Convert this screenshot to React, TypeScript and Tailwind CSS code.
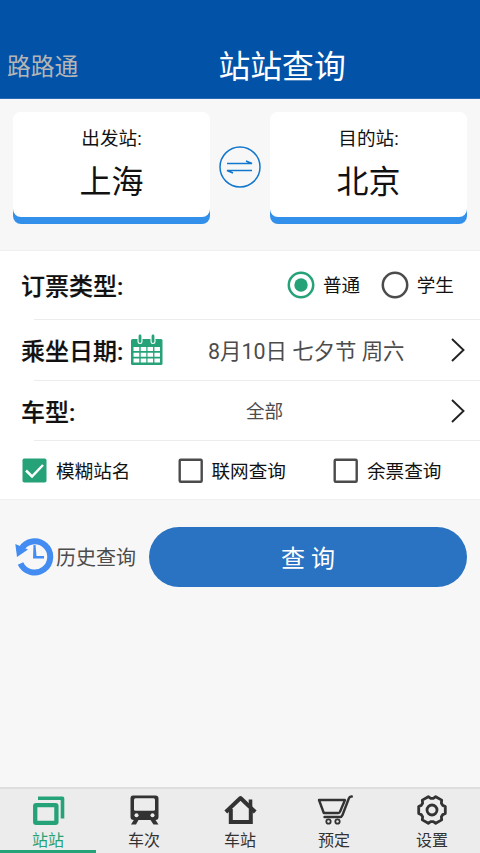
import type { ReactNode } from "react";

function StationCard({ label, name }: { label: string; name: string }) {
  return (
    <button className="block h-28 w-[197px] rounded-lg bg-[linear-gradient(to_bottom,#fff_50%,#3290eb_50%)] pb-[7px]">
      <span className="flex h-[105px] flex-col items-center rounded-lg bg-white">
        <span className="mt-[13px] text-[18.6px] leading-7">{label}</span>
        <span className="mt-1 text-[32px] leading-[50px]">{name}</span>
      </span>
    </button>
  );
}

function Radio({ label, checked = false }: { label: string; checked?: boolean }) {
  return (
    <label className="flex items-center gap-2">
      <svg width="28" height="28" viewBox="0 0 28 28" fill="none">
        <circle cx="14" cy="14" r="12.2" stroke={checked ? "#26a278" : "#4b4b4b"} strokeWidth="2.5" />
        {checked && <circle cx="14" cy="14" r="6.7" fill="#26a278" />}
      </svg>
      <span className="pt-1 text-[18.6px]">{label}</span>
    </label>
  );
}

function Check({ label, checked = false }: { label: string; checked?: boolean }) {
  return (
    <label className="flex w-[155.5px] shrink-0 items-center gap-[9px]">
      <svg width="25" height="25" viewBox="0 0 25 25" fill="none">
        {checked ? (
          <>
            <rect x=".5" y=".5" width="24" height="24" rx="1.8" fill="#26a278" />
            <path d="m4 12.500 6 6L21 7" stroke="white" strokeWidth="2.500" />
          </>
        ) : (
          <rect x="1.700" y="1.700" width="22" height="22" rx="1" stroke="#4b4b4b" strokeWidth="2.400" />
        )}
      </svg>
      <span className="pt-[4px] text-[18.6px]">{label}</span>
    </label>
  );
}

function RowTitle({ children }: { children: ReactNode }) {
  return <h2 className="pt-[4px] text-[24px] font-medium [-webkit-text-stroke:0.2px_#111]">{children}</h2>;
}

function Arrow() {
  return (
    <svg width="16" height="26" viewBox="0 0 16 26" fill="none" stroke="#222" strokeWidth="1.900">
      <path d="m2 2 11.500 11L2 24" />
    </svg>
  );
}

function Tab({ label, active = false, children }: { label: string; active?: boolean; children: ReactNode }) {
  return (
    <button
      className={
        active
          ? "flex w-24 flex-col items-center border-b-3 border-[#26a278] pt-1.5 text-[#26a278]"
          : "flex w-24 flex-col items-center border-b-3 border-transparent pt-1.5 text-[#333]"
      }
    >
      <svg className="shrink-0" width="38" height="34" viewBox="0 0 38 34" fill="none" stroke="currentColor" strokeWidth="2.500">
        {children}
      </svg>
      <span className="mt-[2px] text-base leading-5">{label}</span>
    </button>
  );
}

export default function App() {
  return (
    <div className="flex h-[853px] w-[480px] flex-col overflow-hidden bg-[#f7f7f7] font-[Roboto,'Noto_Sans_CJK_SC',sans-serif] text-[#111]">
      <header className="flex h-[99px] shrink-0 items-center border-b border-[#2869b5] bg-[#0252a7] pt-[37px]">
        <span className="w-[218.5px] pl-[7px] text-[23.8px] text-[#b5b5b5]">路路通</span>
        <h1 className="text-[31.8px] text-white">站站查询</h1>
      </header>

      <section className="flex h-[151px] shrink-0 items-start justify-between px-[13px] pt-[13px]">
        <StationCard label="出发站:" name="上海" />
        <svg className="mt-[34px]" width="42" height="42" viewBox="0 0 42 42" fill="none" stroke="#1177cc">
          <circle cx="21" cy="21" r="20" strokeWidth="1.500" />
          <path d="M8 17.500h25l-6-2.500M33 24.500H8l6 2.500" strokeWidth="1.400" />
        </svg>
        <StationCard label="目的站:" name="北京" />
      </section>

      <section className="flex h-[250px] shrink-0 flex-col border-y border-[#f0f0f0] bg-white">
        <div className="flex h-[68px] shrink-0 items-center pl-[21px]">
          <div className="w-[266px]">
            <RowTitle>订票类型:</RowTitle>
          </div>
          <Radio label="普通" checked />
          <div className="w-[20.5px]" />
          <Radio label="学生" />
        </div>
        <div className="ml-[34px] h-px shrink-0 bg-[#ececec]" />
        <div className="flex h-[60px] shrink-0 items-center pr-[14px] pl-[21px]">
          <div className="w-[109px]">
            <RowTitle>乘坐日期:</RowTitle>
          </div>
          <svg width="34" height="32" viewBox="0 0 34 32" fill="none">
            <rect x="1" y="5" width="31.500" height="26" rx="1.500" fill="#26a278" />
            <path d="M10 2.500v5M23 2.500v5" stroke="white" strokeWidth="5" strokeLinecap="round" />
            <path d="M10 2v5.500M23 2v5.500" stroke="#26a278" strokeWidth="2.800" strokeLinecap="round" />
            <path
              d="M3.500 13h5.800v4H3.500zM10.700 13h5.600v4h-5.600zM17.500 13h5.600v4h-5.600zM24.400 13h5.600v4h-5.600zM3.500 18.700h5.800v4H3.500zM10.700 18.700h5.600v4h-5.600zM17.500 18.700h5.600v4h-5.600zM24.400 18.700h5.600v4h-5.600zM3.500 24.400h5.800v4H3.500zM10.700 24.400h5.600v4h-5.600zM17.500 24.400h5.600v4h-5.600zM24.400 24.400h5.600v4h-5.600z"
              fill="white"
            />
          </svg>
          <span className="ml-11 flex-1 pt-1 text-[21.4px] whitespace-nowrap text-[#4c4c4c]">8月10日 七夕节 周六</span>
          <Arrow />
        </div>
        <div className="ml-[34px] h-px shrink-0 bg-[#ececec]" />
        <div className="flex h-[59px] shrink-0 items-center pr-[14px] pl-[21px]">
          <div className="w-[225px]">
            <RowTitle>车型:</RowTitle>
          </div>
          <span className="flex-1 pt-[4px] text-[18.6px] text-[#4c4c4c]">全部</span>
          <span className="mt-px">
            <Arrow />
          </span>
        </div>
        <div className="ml-[34px] h-px shrink-0 bg-[#ececec]" />
        <div className="flex h-[58px] shrink-0 items-center pt-px pl-[22px]">
          <Check label="模糊站名" checked />
          <Check label="联网查询" />
          <Check label="余票查询" />
        </div>
      </section>

      <section className="mt-[27px] flex items-center pr-[13px] pl-[15px]">
        <button className="flex w-[134px] items-center gap-0.5 text-xl text-[#4c4c4c]">
          <svg className="-mt-px shrink-0" width="39" height="39" viewBox="0 0 39 39" fill="none">
            <path d="M6.200 12A15.600 15.600 0 1 1 5.500 26.500" stroke="#438cf2" strokeWidth="6" />
            <path d="M.3 7 13 12.500 2 20z" fill="#438cf2" />
            <path d="m18.500 8-.5 13.500H29V19h-7.500L20.500 8z" fill="#438cf2" />
          </svg>
          <span className="pt-px">历史查询</span>
        </button>
        <button className="h-[60px] w-[318px] rounded-full bg-[#2a72c2] pt-[4px] text-2xl text-white">查 询</button>
      </section>

      <nav className="mt-auto flex h-[66px] border-t-2 border-[#dedede] bg-[#ececec]">
        <Tab label="站站" active>
          <path d="M9 3.200h24.500V23.500" strokeWidth="3.600" strokeLinejoin="round" />
          <rect x="6.200" y="10.200" width="21.200" height="17.600" rx=".8" strokeWidth="4.300" />
        </Tab>
        <Tab label="车次">
          <path d="M8 .5h22.500c2 0 3 1 3 3V22c0 2-1 3-3 3l3 4.500h-5L25.500 25h-12l-2.500 4.500H6L8.800 25C6.500 25 5.500 24 5.500 22V3.500c0-2 .8-3 2.500-3z" fill="currentColor" stroke="none" />
          <rect x="9" y="3.200" width="21" height="12.500" rx="1.500" fill="#ececec" stroke="none" />
          <circle cx="11.500" cy="20.300" r="2" fill="#ececec" stroke="none" />
          <circle cx="27.500" cy="20.300" r="2" fill="#ececec" stroke="none" />
        </Tab>
        <Tab label="车站">
          <path d="m4.800 17 14.700-14 14.700 14" strokeWidth="4" strokeLinejoin="round" />
          <path d="M9.800 14v13h20V14" strokeWidth="4" />
          <path d="M29.500 4.500v8" strokeWidth="3.600" />
        </Tab>
        <div className="mr-[2px] -ml-[2px] flex">
          <Tab label="预定">
            <g transform="translate(2.500 -1)">
              <path d="M34.300 2.500h-.5c-1.300 0-2 .6-2.500 2L25 21c-.6 1.500-1 2-2.500 2H7M27.500 6H1.500l4.800 13h14.500c1 0 1.500-.5 1.800-1.500z" strokeWidth="2.400" strokeLinejoin="round" strokeLinecap="round" />
              <circle cx="11" cy="27.500" r="2.200" strokeWidth="1.800" />
              <circle cx="20" cy="27.500" r="2.200" strokeWidth="1.800" />
            </g>
          </Tab>
        </div>
        <Tab label="设置">
          <g transform="translate(19 15)">
            <path
              d="M13.300-3.500 13.300 3.500 10.800 4.600 9.400 6.800 9.700 9.900 3.700 13.300 1.300 11.600H-1.300L-3.700 13.300-9.700 9.900-9.400 6.800-10.800 4.600-13.300 3.500-13.300-3.500-10.800-4.600-9.400-6.800-9.700-9.900-3.700-13.300-1.300-11.600H1.300L3.700-13.300 9.700-9.900 9.400-6.800 10.800-4.600z"
              strokeWidth="2.800"
              strokeLinejoin="round"
            />
            <circle r="5" strokeWidth="2.800" />
          </g>
        </Tab>
      </nav>
    </div>
  );
}
